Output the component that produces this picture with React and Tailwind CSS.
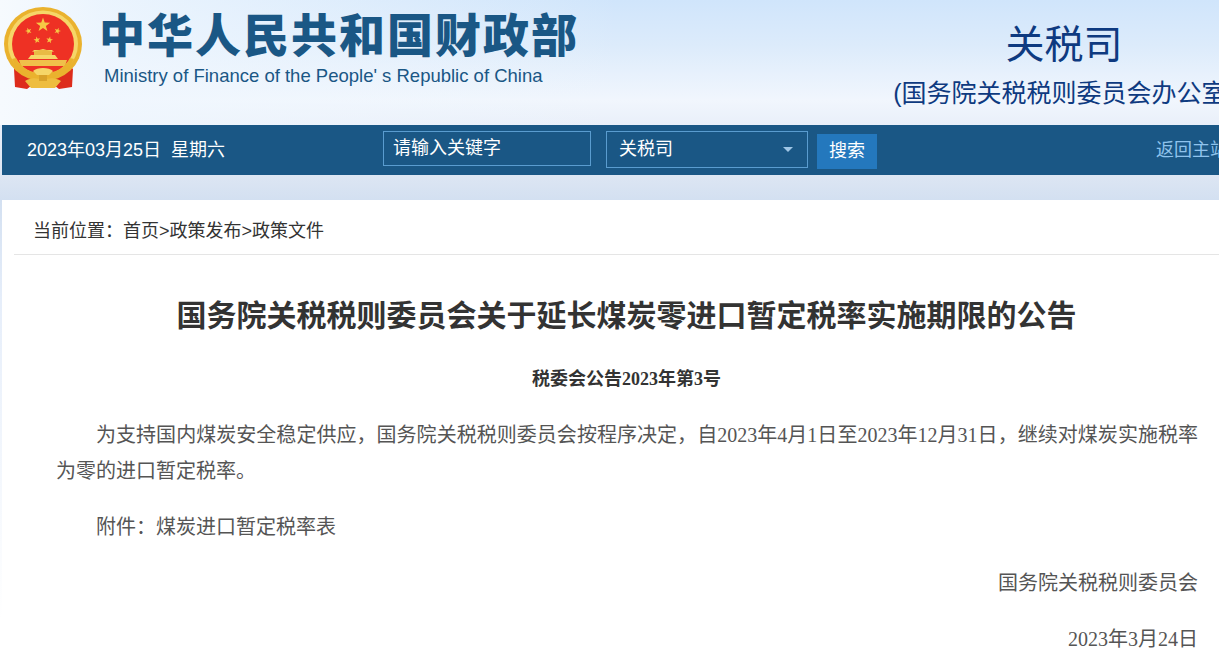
const cjkSans = "font-['Liberation_Sans','Noto_Sans_CJK_SC',sans-serif]";
const cjkSerif = "font-['Liberation_Serif','Noto_Sans_CJK_SC',serif]";

function Star({ x, y, r, rot = 0 }) {
  const pts = [];
  for (let i = 0; i < 10; i++) {
    const rad = i % 2 === 0 ? r : r * 0.4;
    const a = ((-90 + rot + i * 36) * Math.PI) / 180;
    pts.push(`${(x + rad * Math.cos(a)).toFixed(2)},${(y + rad * Math.sin(a)).toFixed(2)}`);
  }
  return <polygon points={pts.join(" ")} fill="#f6c945" />;
}

function Emblem() {
  return (
    <svg width="84" height="90" viewBox="0 0 84 90" className="block shrink-0">
      <path d="M13 66 L18 60 L28 72 L56 72 L66 60 L72 66 L71 84 L58 86 L50 80 L34 80 L26 86 L14 84 Z" fill="#dd2c1c" />
      <ellipse cx="42" cy="41" rx="39" ry="37" fill="#eab22e" />
      <ellipse cx="42" cy="41" rx="35" ry="33.5" fill="#f6d668" />
      <ellipse cx="42" cy="41" rx="31" ry="30" fill="#ee3124" />
      <Star x={42} y={22} r={7.5} />
      <Star x={27.5} y={28} r={3.5} rot={-20} />
      <Star x={56.5} y={28} r={3.5} rot={20} />
      <Star x={36} y={37} r={3.5} rot={-10} />
      <Star x={48.5} y={37} r={3.5} rot={10} />
      <path d="M30 52 L54 52 L57 56 L27 56 Z" fill="#f6d668" />
      <rect x="33" y="47" width="18" height="5" fill="#e9ba44" />
      <path d="M31 49 L42 46 L53 49 L51 47 L33 47 Z" fill="#f6d668" />
      <path d="M18 57 L66 57 L64 63 L20 63 Z" fill="#f0c04a" />
      <path d="M11 56 C16 70 28 75 42 75 C56 75 68 70 73 56 L69 55 C63 66 54 70 42 70 C30 70 21 66 15 55 Z" fill="#eab22e" />
      <path d="M32 68 C36 64 48 64 52 68 L48 72 L36 72 Z" fill="#f6d668" />
      <path d="M24 78 C30 74 36 75 42 77 C48 75 54 74 60 78 L54 85 L30 85 Z" fill="#eebd3f" />
      <rect x="38" y="72" width="8" height="6" fill="#d9a22a" />
    </svg>
  );
}

export default function App() {
  return (
    <div className={`w-[1219px] h-[656px] overflow-hidden relative ${cjkSans} bg-[linear-gradient(180deg,#d0e5fb_0px,#dcebfb_45px,#f1f6fd_100px,#e9eff9_125px,#dde6f3_175px,#d3e0f1_200px,#e6eefa_300px,#ffffff_620px)]`}>
      {/* header */}
      <div className="h-[125px] flex bg-[linear-gradient(90deg,#f6fafe_0px,rgba(240,247,254,0.85)_100px,rgba(240,247,254,0)_620px)]">
        <div className="w-[892px] shrink-0 flex items-start pt-[3px] pl-[1px]">
          <Emblem />
          <div className="ml-[14px] pt-[5px] text-[#1a5785]">
            <div className="text-[46px] leading-[56px] font-black tracking-[2px] whitespace-nowrap">中华人民共和国财政部</div>
            <div className="text-[18.5px] leading-[22px] mt-[1px] ml-[5px] whitespace-nowrap">Ministry of Finance of the People' s Republic of China</div>
          </div>
        </div>
        <div className="w-[344px] shrink-0 text-[#0e3a80] text-center pt-[19px]">
          <div className="text-[39px] leading-[52px] tracking-normal">关税司</div>
          <div className="text-[25px] leading-[32px] mt-[6px] whitespace-nowrap">(国务院关税税则委员会办公室)</div>
        </div>
      </div>

      {/* nav bar */}
      <div className="ml-[2px] h-[50px] w-[1300px] bg-[#1a5785] flex items-start text-white text-[18px]">
        <div className="w-[381px] shrink-0 pl-[25px] pt-[13px] leading-[24px] whitespace-nowrap">2023年03月25日&nbsp;&nbsp;星期六</div>
        <div className="w-[208px] h-[35px] mt-[6px] shrink-0 border border-[#5a9ccf] pl-[9px] leading-[33px]">请输入关键字</div>
        <div className="w-[202px] h-[37px] mt-[6px] ml-[15px] shrink-0 border border-[#5a9ccf] pl-[12px] pr-[14px] flex items-center justify-between leading-[35px]">
          <span>关税司</span>
          <span className="w-0 h-0 border-x-[5px] border-x-transparent border-t-[5px] border-t-[#9fc6e6]" />
        </div>
        <div className="w-[60px] h-[35px] mt-[9px] ml-[9px] shrink-0 bg-[#2478bd] text-center leading-[35px]">搜索</div>
        <div className="ml-[279px] pt-[13px] leading-[24px] shrink-0 whitespace-nowrap text-[#8fc3ec]">返回主站</div>
      </div>

      {/* content */}
      <div className="ml-[2px] mt-[25px] bg-white h-[500px]">
        <div className="ml-[12px] h-[55px] border-b border-[#e5e5e5] pl-[19px] pt-[19px] text-[18px] leading-[24px] text-[#333333]">当前位置：首页&gt;政策发布&gt;政策文件</div>
        <h1 className="mt-[39px] ml-[2px] w-[1245px] text-center text-[30px] leading-[44px] font-bold text-[#333333]">国务院关税税则委员会关于延长煤炭零进口暂定税率实施期限的公告</h1>
        <div className={`mt-[23px] ml-[2px] w-[1245px] text-center text-[18px] leading-[36px] font-bold text-[#333333] ${cjkSerif}`}>税委会公告2023年第3号</div>
        <div className={`ml-[54px] w-[1142px] mt-[20px] text-[20px] leading-[36px] text-[#555555] ${cjkSerif}`}>
          <p className="indent-[40px] mb-[20px] [text-align:justify]">为支持国内煤炭安全稳定供应，国务院关税税则委员会按程序决定，自2023年4月1日至2023年12月31日，继续对煤炭实施税率为零的进口暂定税率。</p>
          <p className="indent-[40px] mb-[20px]">附件：煤炭进口暂定税率表</p>
          <p className="text-right mb-[20px]">国务院关税税则委员会</p>
          <p className="text-right">2023年3月24日</p>
        </div>
      </div>
    </div>
  );
}
